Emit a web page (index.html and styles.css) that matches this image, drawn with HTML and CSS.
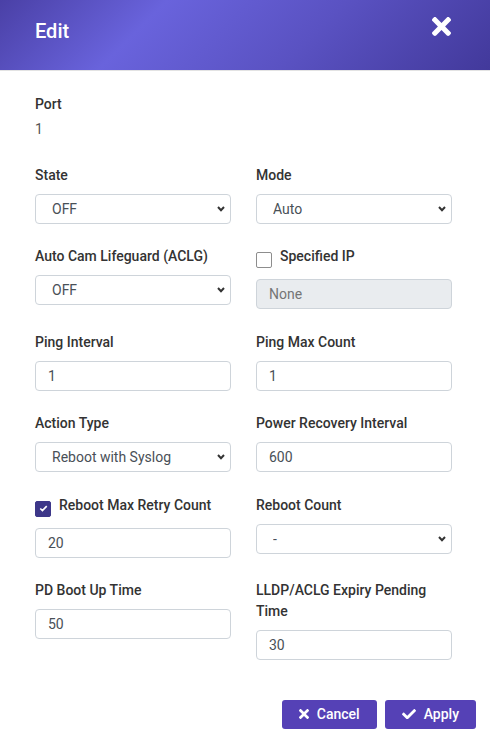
FILE: index.html
```html
<!DOCTYPE html>
<html lang="en">
<head>
<meta charset="utf-8">
<title>Edit</title>
<link rel="stylesheet" href="styles.css">
</head>
<body>
<div class="modal">
  <header class="modal-header">
    <h1 class="modal-title">Edit</h1>
    <button class="close-btn" type="button" aria-label="Close">
      <svg class="close-icon" viewBox="0 80 352 352" width="19" height="19"><path fill="#fff" d="M242.72 256l100.07-100.07c12.28-12.28 12.28-32.19 0-44.48l-22.24-22.24c-12.28-12.28-32.19-12.28-44.48 0L176 189.28 75.93 89.21c-12.28-12.280-32.19-12.28-44.48 0L9.21 111.45c-12.28 12.28-12.28 32.19 0 44.48L109.28 256 9.21 356.07c-12.28 12.28-12.28 32.19 0 44.48l22.24 22.24c12.28 12.28 32.2 12.28 44.48 0L176 322.72l100.07 100.07c12.28 12.28 32.2 12.28 44.48 0l22.24-22.24c12.28-12.28 12.28-32.19 0-44.48L242.72 256z"/></svg>
    </button>
  </header>

  <div class="modal-body">
    <div class="port">
      <div class="label">Port</div>
      <div class="value">1</div>
    </div>

    <div class="grid">
      <div class="field">
        <label class="label">State</label>
        <div class="select-wrap">
          <select class="control select"><option>OFF</option></select>
          <svg class="chev" viewBox="0 0 8 6" width="8" height="6"><polyline points="1,1 4,4.2 7,1" fill="none" stroke="#333" stroke-width="2"/></svg>
        </div>
      </div>
      <div class="field">
        <label class="label">Mode</label>
        <div class="select-wrap">
          <select class="control select"><option>Auto</option></select>
          <svg class="chev" viewBox="0 0 8 6" width="8" height="6"><polyline points="1,1 4,4.2 7,1" fill="none" stroke="#333" stroke-width="2"/></svg>
        </div>
      </div>

      <div class="field">
        <label class="label">Auto Cam Lifeguard (ACLG)</label>
        <div class="select-wrap">
          <select class="control select"><option>OFF</option></select>
          <svg class="chev" viewBox="0 0 8 6" width="8" height="6"><polyline points="1,1 4,4.2 7,1" fill="none" stroke="#333" stroke-width="2"/></svg>
        </div>
      </div>
      <div class="field">
        <label class="label check-label"><span class="box"></span>Specified IP</label>
        <input class="control input" type="text" value="None" disabled>
      </div>

      <div class="field">
        <label class="label">Ping Interval</label>
        <input class="control input" type="text" value="1">
      </div>
      <div class="field">
        <label class="label">Ping Max Count</label>
        <input class="control input" type="text" value="1">
      </div>

      <div class="field">
        <label class="label">Action Type</label>
        <div class="select-wrap">
          <select class="control select"><option>Reboot with Syslog</option></select>
          <svg class="chev" viewBox="0 0 8 6" width="8" height="6"><polyline points="1,1 4,4.2 7,1" fill="none" stroke="#333" stroke-width="2"/></svg>
        </div>
      </div>
      <div class="field">
        <label class="label">Power Recovery Interval</label>
        <input class="control input" type="text" value="600">
      </div>

      <div class="field">
        <label class="label check-label"><span class="box checked"><svg viewBox="0 0 10 8" width="9" height="7"><polyline points="1.3,4 3.8,6.3 8.7,1.3" fill="none" stroke="#fff" stroke-width="1.9"/></svg></span>Reboot Max Retry Count</label>
        <input class="control input" type="text" value="20">
      </div>
      <div class="field">
        <label class="label">Reboot Count</label>
        <div class="select-wrap">
          <select class="control select"><option>-</option></select>
          <svg class="chev" viewBox="0 0 8 6" width="8" height="6"><polyline points="1,1 4,4.2 7,1" fill="none" stroke="#333" stroke-width="2"/></svg>
        </div>
      </div>

      <div class="field">
        <label class="label">PD Boot Up Time</label>
        <input class="control input" type="text" value="50">
      </div>
      <div class="field">
        <label class="label">LLDP/ACLG Expiry Pending Time</label>
        <input class="control input" type="text" value="30">
      </div>
    </div>
  </div>

  <footer class="modal-footer">
    <button class="btn" type="button">
      <svg viewBox="0 80 352 352" width="10" height="10"><path fill="#fff" d="M242.72 256l100.07-100.07c12.28-12.28 12.28-32.19 0-44.48l-22.24-22.24c-12.28-12.28-32.19-12.28-44.48 0L176 189.28 75.930 89.21c-12.28-12.28-32.19-12.28-44.48 0L9.21 111.45c-12.28 12.28-12.28 32.19 0 44.48L109.28 256 9.21 356.07c-12.28 12.28-12.28 32.19 0 44.48l22.24 22.24c12.28 12.28 32.2 12.28 44.48 0L176 322.72l100.07 100.07c12.28 12.28 32.2 12.28 44.48 0l22.24-22.24c12.28-12.28 12.28-32.19 0-44.48L242.72 256z"/></svg>
      <span>Cancel</span>
    </button>
    <button class="btn" type="button">
      <svg viewBox="0 64 512 384" width="14" height="10.5"><path fill="#fff" d="M173.898 439.404l-166.4-166.4c-9.997-9.997-9.997-26.206 0-36.204l36.203-36.204c9.997-9.998 26.207-9.998 36.204 0L192 312.69 432.095 72.596c9.997-9.997 26.207-9.997 36.204 0l36.203 36.204c9.997 9.997 9.997 26.206 0 36.204l-294.4 294.401c-9.998 9.997-26.207 9.997-36.204-.001z"/></svg>
      <span>Apply</span>
    </button>
  </footer>
</div>
</body>
</html>
```

FILE: styles.css
```css
* { box-sizing: border-box; }

html, body {
  margin: 0;
  padding: 0;
  background: #fff;
}

body {
  font-family: Roboto, "Liberation Sans", Arial, sans-serif;
  font-size: 14px;
  line-height: 21px;
  color: #333;
}

.modal {
  width: 490px;
  min-height: 743px;
  background: #fff;
}

.modal-header {
  height: 71px;
  display: flex;
  justify-content: space-between;
  align-items: flex-start;
  padding: 16px 39px 0 35px;
  background: linear-gradient(135deg, #4a40a6 0%, #6963dc 30%, #5a52c2 62%, #42399b 100%);
  border-bottom: 1px solid #e3e3e3;
}

.modal-title {
  margin: 0;
  font-size: 20px;
  line-height: 30px;
  font-weight: 500;
  color: #fff;
}

.close-btn {
  margin: 1px 0 0 0;
  padding: 0;
  border: 0;
  background: transparent;
  display: flex;
  cursor: pointer;
}

.modal-body {
  padding: 22.5px 38px 0 35px;
}

.label {
  display: block;
  font-weight: 500;
  color: #333;
  line-height: 21px;
  margin-bottom: 8px;
}

.port {
  margin-bottom: 25px;
}

.port .label {
  margin-bottom: 4px;
}

.value {
  color: #555;
  line-height: 21px;
}

.grid {
  display: grid;
  grid-template-columns: 1fr 1fr;
  column-gap: 25px;
  row-gap: 22.5px;
  align-items: start;
}

.field {
  display: flex;
  flex-direction: column;
}

.check-label {
  display: flex;
  align-items: flex-start;
  margin-bottom: 11px;
}

.box {
  flex: none;
  width: 16px;
  height: 16px;
  margin: 6px 8px 0 0;
  border: 1px solid #8d8d8d;
  border-radius: 2px;
  background: #fff;
  display: flex;
  align-items: center;
  justify-content: center;
}

.box.checked {
  background: #3d3789;
  border-color: #3d3789;
}

.control {
  display: block;
  width: 100%;
  height: 30px;
  margin: 0;
  border: 1px solid #ced4da;
  border-radius: 4px;
  background: #fff;
  font-family: inherit;
  font-size: 14px;
  color: #495057;
  outline: none;
}

.input {
  padding: 0 12px;
}

.input:disabled {
  background: #e9ecef;
  color: #757575;
}

.select-wrap {
  position: relative;
}

.select {
  -webkit-appearance: none;
  appearance: none;
  padding: 0 24px 0 16px;
}

.chev {
  position: absolute;
  right: 6px;
  top: 12px;
  pointer-events: none;
}

.modal-footer {
  display: flex;
  justify-content: flex-end;
  gap: 8px;
  padding: 39.5px 14px 14px 0;
}

.btn {
  display: flex;
  align-items: center;
  gap: 8px;
  height: 29px;
  padding: 0 17px;
  border: 0;
  border-radius: 3px;
  background: #5541b6;
  color: #fff;
  font-family: inherit;
  font-size: 14px;
  font-weight: 500;
  cursor: pointer;
}
```
